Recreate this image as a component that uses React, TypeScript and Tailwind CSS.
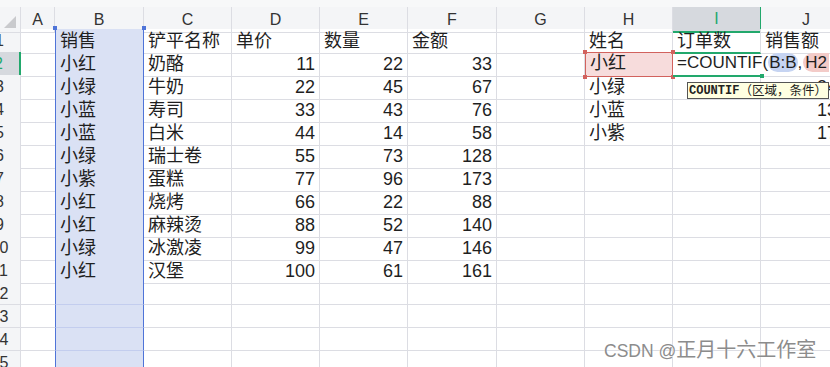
import React from "react";

const grid =
  "grid grid-cols-[21px_34px_89px_88px_88px_88px_89px_88px_88px_88px_91px]";
const line = "border-[#dcdde3]";

type Row = {
  b?: string;
  c?: string;
  d?: string;
  e?: string;
  f?: string;
  h?: string;
  i?: string;
  j?: string;
};

const rows: Row[] = [
  { b: "销售", c: "铲平名称", d: "单价", e: "数量", f: "金额", h: "姓名", i: "订单数", j: "销售额" },
  { b: "小红", c: "奶酪", d: "11", e: "22", f: "33", h: "小红" },
  { b: "小绿", c: "牛奶", d: "22", e: "45", f: "67", h: "小绿", j: "341" },
  { b: "小蓝", c: "寿司", d: "33", e: "43", f: "76", h: "小蓝", j: "134" },
  { b: "小蓝", c: "白米", d: "44", e: "14", f: "58", h: "小紫", j: "173" },
  { b: "小绿", c: "瑞士卷", d: "55", e: "73", f: "128" },
  { b: "小紫", c: "蛋糕", d: "77", e: "96", f: "173" },
  { b: "小红", c: "烧烤", d: "66", e: "22", f: "88" },
  { b: "小红", c: "麻辣烫", d: "88", e: "52", f: "140" },
  { b: "小绿", c: "冰激凌", d: "99", e: "47", f: "146" },
  { b: "小红", c: "汉堡", d: "100", e: "61", f: "161" },
  {},
  {},
  {},
  {},
];

const letters = ["A", "B", "C", "D", "E", "F", "G", "H", "I", "J"];

const Cell = ({
  children,
  className = "",
  right = false,
}: {
  children?: React.ReactNode;
  className?: string;
  right?: boolean;
}) => (
  <div
    className={`h-full border-b border-r ${line} px-[4px] pt-[1px] overflow-hidden whitespace-nowrap leading-[23px] ${
      right ? "text-right" : "text-left"
    } ${className}`}
  >
    {children}
  </div>
);

export default function App() {
  return (
    <div className="relative w-[830px] h-[367px] overflow-hidden bg-white font-['Liberation_Sans','Noto_Sans_CJK_SC',sans-serif] text-[#1f1f1f]">
      {/* strip above the column headers */}
      <div className="h-[7px] bg-[#f7f8f9]" />

      {/* Column headers */}
      <div className={`${grid} h-[22px] bg-[#f4f5f7] text-[16px] text-[#333]`}>
        <div className={`relative border-r border-b ${line}`}>
          <div className="absolute right-[4px] bottom-[4px] w-0 h-0 border-l-[12px] border-l-transparent border-b-[12px] border-b-[#c9cacd]" />
        </div>
        {letters.map((l) => (
          <div
            key={l}
            className={`flex items-center justify-center border-r border-b ${
              l === "I"
                ? "bg-[#d6d9de] border-b-2 border-b-[#22a86c] text-[#22a86c]"
                : line
            }`}
          >
            {l}
          </div>
        ))}
      </div>

      {/* Rows */}
      {rows.map((r, idx) => {
        const n = idx + 1;
        const active = n === 2;
        return (
          <div key={n} className={`${grid} h-[23px] text-[18px]`}>
            {/* row number, partly scrolled off */}
            <div
              className={`flex justify-end overflow-hidden border-b ${
                active
                  ? "bg-[#d6d9de] border-r-2 border-r-[#22a86c] text-[#22a86c]"
                  : "bg-[#f4f5f7] border-r text-[#333]"
              } ${line} text-[16px] leading-[23px]`}
            >
              <div className="w-[41px] shrink-0 text-center">{n}</div>
            </div>

            {/* A */}
            <div className={`border-b ${line}`} />

            {/* B - selected range */}
            <div className="relative h-full border-b border-b-[#c3cdee] border-x border-x-[#4f74d8] bg-[#dae1f4] px-[4px] pt-[1px] leading-[23px] whitespace-nowrap">
              {n === 1 && (
                <>
                  <span className="absolute -left-[3px] -top-[3px] w-[4px] h-[4px] bg-[#4f74d8]" />
                  <span className="absolute -right-[3px] -top-[3px] w-[4px] h-[4px] bg-[#4f74d8]" />
                </>
              )}
              {r.b}
            </div>

            <Cell>{r.c}</Cell>
            <Cell right={n > 1}>{r.d}</Cell>
            <Cell right={n > 1}>{r.e}</Cell>
            <Cell right={n > 1}>{r.f}</Cell>
            <Cell />

            {/* H */}
            {active ? (
              <div className="relative h-full border border-[#d2625e] bg-[#f7dcdc] px-[4px] leading-[21px] whitespace-nowrap">
                <span className="absolute -left-[3px] -top-[3px] w-[4px] h-[4px] bg-[#d2625e]" />
                <span className="absolute -right-[3px] -top-[3px] w-[4px] h-[4px] bg-[#d2625e]" />
                <span className="absolute -left-[3px] -bottom-[3px] w-[4px] h-[4px] bg-[#d2625e]" />
                <span className="absolute -right-[3px] -bottom-[3px] w-[4px] h-[4px] bg-[#d2625e]" />
                {r.h}
              </div>
            ) : (
              <Cell>{r.h}</Cell>
            )}

            {/* I - cell being edited */}
            {active ? (
              <div className="relative z-10 h-full border-b-2 border-[#22a86c] px-[4px] text-[17px] leading-[21px] whitespace-nowrap">
                =COUNTIF(
                <span className="rounded-full bg-[#c6d4f2] px-[1px]">B:B</span>,
                <span className="ml-[1px] rounded-l-full bg-[#f3cbc8] px-[2px]">H2</span>
                <span className="absolute -right-[3px] -bottom-[3px] w-[4px] h-[4px] bg-[#22a86c]" />
              </div>
            ) : (
              <Cell className={n === 1 ? "border-b-2 !border-b-[#22a86c]" : ""}>
                {r.i}
              </Cell>
            )}

            {/* J */}
            {active ? (
              <div className={`h-full border-b ${line}`} />
            ) : (
              <Cell right={n > 1}>{r.j}</Cell>
            )}
          </div>
        );
      })}

      {/* function hint tooltip */}
      <div className="absolute left-[687px] top-[82px] z-20 flex items-center h-[17px] border border-[#555] bg-[#ffffe1] px-[1px] text-[#222] whitespace-nowrap">
        <span className="font-['Liberation_Mono',monospace] font-bold text-[12px]">COUNTIF</span>
        <span className="font-['Noto_Sans_CJK_SC',sans-serif] text-[12.5px] leading-none">（区域，条件）</span>
      </div>

      {/* watermark */}
      <div className="absolute left-[604px] top-[334px] flex items-baseline text-[#8c8c8c] whitespace-nowrap [text-shadow:0_0_2px_#fff]">
        <span className="text-[17.5px]">CSDN @</span>
        <span className="font-['Noto_Sans_CJK_SC',sans-serif] text-[20px]">正月十六工作室</span>
      </div>
    </div>
  );
}
